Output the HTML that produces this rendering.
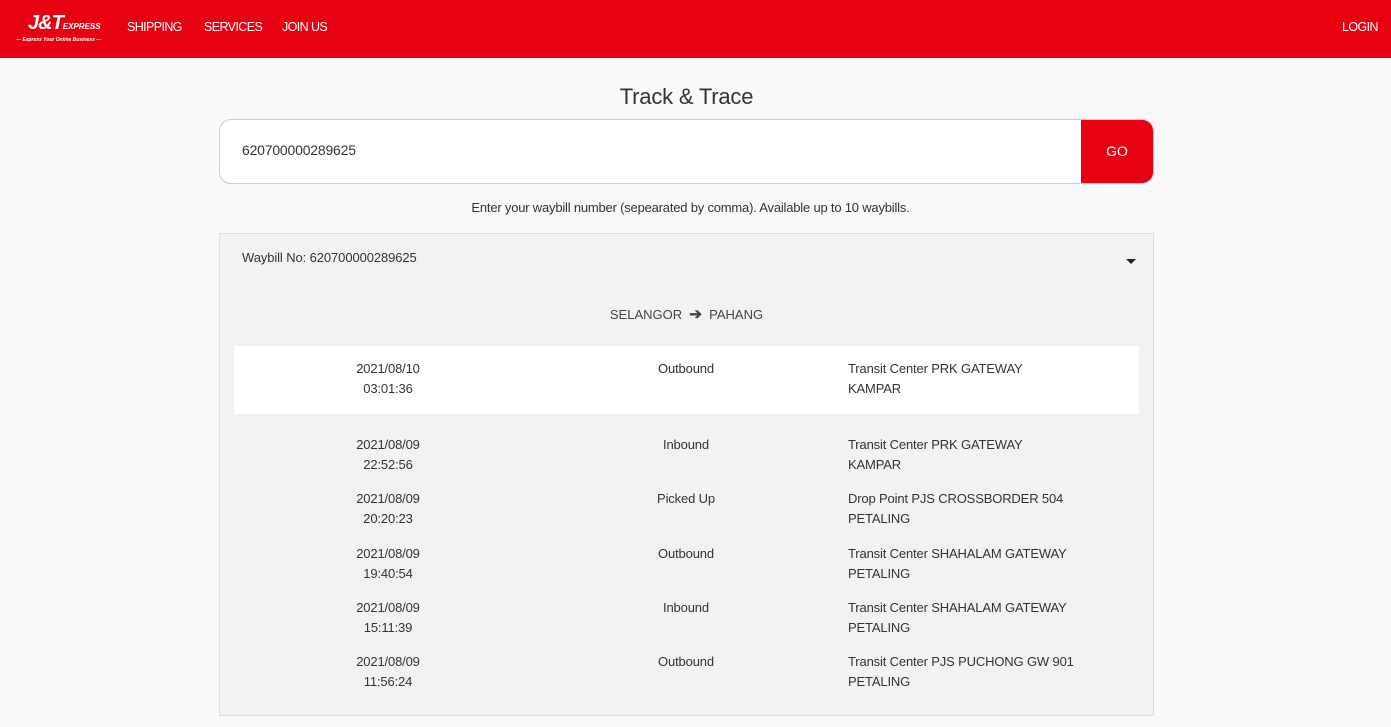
<!DOCTYPE html>
<html><head><meta charset="utf-8"><style>
*{margin:0;padding:0;box-sizing:border-box}
body{width:1391px;height:727px;overflow:hidden;background:#f9f9fb;font-family:"Liberation Sans",sans-serif;color:#333;position:relative}
.hdr{height:58px;background:#e60012;position:relative;color:#fff}
.nav{position:absolute;top:20px;font-size:12.5px;letter-spacing:-0.6px}
.logo{position:absolute;left:16px;top:13px;width:92px}
.logo .b{font-size:20px;font-weight:bold;font-style:italic;letter-spacing:-1px;line-height:20px;margin-left:12px}
.logo .b small{font-size:8px;letter-spacing:0}
.logo .s{font-size:5px;font-style:italic;font-weight:bold;white-space:nowrap}
h1{position:absolute;top:84px;left:0;width:1373px;text-align:center;font-weight:normal;font-size:22px;color:#333;letter-spacing:-0.2px}
.inp{position:absolute;left:219px;top:119px;width:935px;height:65px;background:#fff;border:1px solid #ccc;border-radius:12px;overflow:hidden}
.inp span{position:absolute;left:22px;top:22px;font-size:14px;letter-spacing:-0.2px}
.go{position:absolute;right:0;top:0;width:72px;height:100%;background:#e60012;color:#fff;font-size:14px;text-align:center;line-height:63px}
.hint{position:absolute;top:200px;left:0;width:1381px;text-align:center;font-size:13px;letter-spacing:-0.2px}
.card{position:absolute;left:219px;top:233px;width:935px;height:483px;background:#f2f2f2;border:1px solid #ddd}
.wb{position:absolute;left:22px;top:16px;font-size:13px;letter-spacing:-0.1px}
.tri{position:absolute;left:906px;top:25px;border-left:5px solid transparent;border-right:5px solid transparent;border-top:5px solid #222}
.route{position:absolute;top:71px;width:100%;text-align:center;font-size:13px;color:#444}
.row{position:absolute;left:14px;width:905px;height:68px;font-size:13px;line-height:20px;letter-spacing:-0.15px}
.row .d{position:absolute;left:104px;width:100px;text-align:center}
.row .t{position:absolute;left:402px;width:100px;text-align:center}
.row .l{position:absolute;left:614px}
</style></head><body>
<div class="hdr">
<div class="logo"><div class="b">J&amp;T<small>EXPRESS</small></div><div class="s">— Express Your Online Business —</div></div>
<div class="nav" style="left:127px">SHIPPING</div>
<div class="nav" style="left:204px">SERVICES</div>
<div class="nav" style="left:282px">JOIN US</div>
<div class="nav" style="left:1342px">LOGIN</div>
</div>
<h1>Track &amp; Trace</h1>
<div class="inp"><span>620700000289625</span><div class="go">GO</div></div>
<div class="hint">Enter your waybill number (sepearated by comma). Available up to 10 waybills.</div>
<div class="card">
<div class="wb">Waybill No: 620700000289625</div><div class="tri"></div>
<div class="route">SELANGOR &nbsp;<b style="font-size:15px">➔</b>&nbsp; PAHANG</div>
<div class="row" style="top:112px;background:#fff"><div class="d" style="top:13px">2021/08/10<br>03:01:36</div><div class="t" style="top:13px">Outbound</div><div class="l" style="top:13px">Transit Center PRK GATEWAY<br>KAMPAR</div></div>
<div class="row" style="top:201px"><div class="d">2021/08/09<br>22:52:56</div><div class="t">Inbound</div><div class="l">Transit Center PRK GATEWAY<br>KAMPAR</div></div>
<div class="row" style="top:255px"><div class="d">2021/08/09<br>20:20:23</div><div class="t">Picked Up</div><div class="l">Drop Point PJS CROSSBORDER 504<br>PETALING</div></div>
<div class="row" style="top:310px"><div class="d">2021/08/09<br>19:40:54</div><div class="t">Outbound</div><div class="l">Transit Center SHAHALAM GATEWAY<br>PETALING</div></div>
<div class="row" style="top:364px"><div class="d">2021/08/09<br>15:11:39</div><div class="t">Inbound</div><div class="l">Transit Center SHAHALAM GATEWAY<br>PETALING</div></div>
<div class="row" style="top:418px"><div class="d">2021/08/09<br>11:56:24</div><div class="t">Outbound</div><div class="l">Transit Center PJS PUCHONG GW 901<br>PETALING</div></div>
</div>
</body></html>
